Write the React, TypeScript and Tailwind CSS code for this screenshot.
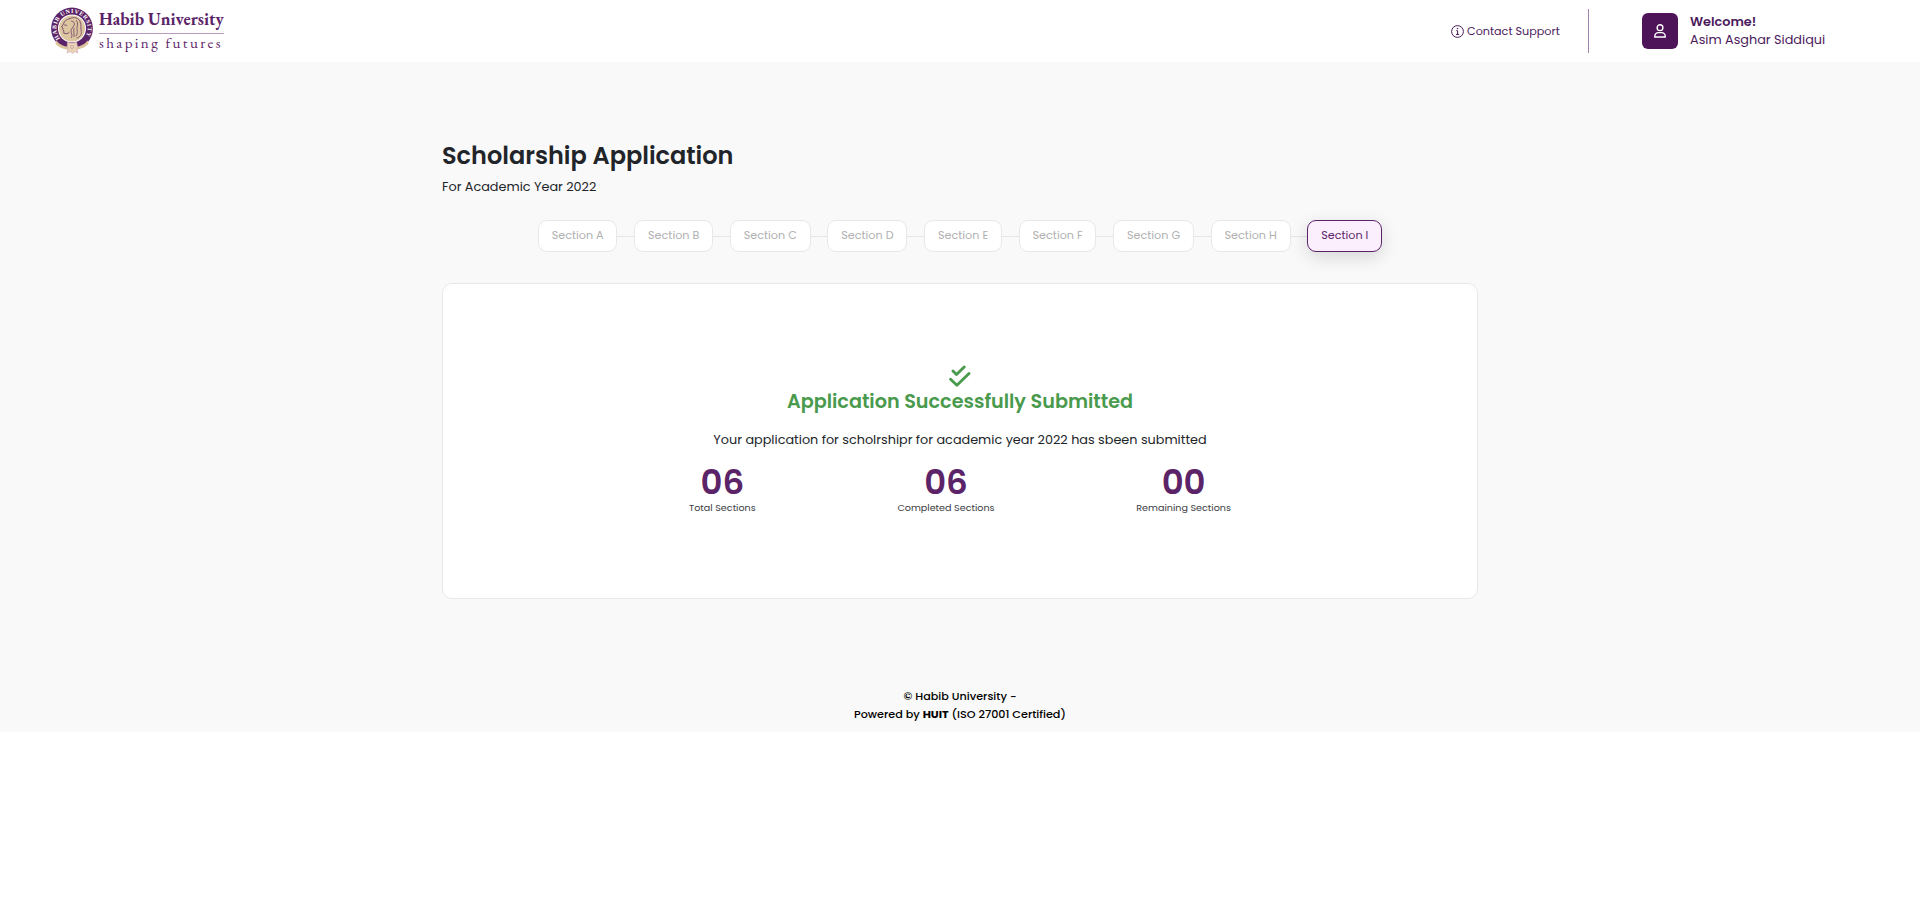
const sections = ["A", "B", "C", "D", "E", "F", "G", "H", "I"];

const stats = [
  { value: "06", label: "Total Sections" },
  { value: "06", label: "Completed Sections" },
  { value: "00", label: "Remaining Sections" },
];

function Seal() {
  return (
    <svg width="44" height="48" viewBox="0 0 44 48" className="shrink-0">
      <defs>
        <path id="ring" d="M10 32.5 A15.6 15.6 0 1 1 34.8 31.500" />
      </defs>
      <circle cx="22" cy="22.5" r="20.9" fill="#5c2468" />
      <circle cx="22" cy="22.5" r="14" fill="#fff" />
      <circle cx="22" cy="22.5" r="13" fill="#dcc6a0" />
      <text fill="#fff" fontFamily="Liberation Serif, serif" fontWeight="700" fontSize="6">
        <textPath href="#ring" textLength="67" lengthAdjust="spacing">HABIB UNIVERSITY</textPath>
      </text>
      <g fill="none" stroke="#7b4a70" strokeWidth="0.9" strokeLinecap="round" strokeLinejoin="round">
        <path d="M20 12.500c-3.500.8-6 2.500-6.500 5.500L11.500 21l1.500 1-.2 2 1 .8v2.400l3.200.6 2-1.200" />
        <path d="M20 12.500c4-2 8.500-.8 10 3 1.800 4.500.3 6.500 1.300 10 .5 3-1.300 5.500-4.300 6.500" />
        <path d="M21.500 15c2.500.3 3.500 2.200 2.500 4.500s-3 3-3 5.500 2 3.500.5 6.500" />
        <path d="M26.500 14.500c2 2.500.8 4.800.5 7s1.500 5-1 8.500M14.500 19l2.200.3M24 22.500c-.8 2.500.5 5 0 8" />
      </g>
      <path d="M6.500 34.500c3 4.500 9 6.500 15.500 6.500s12.500-2 15.500-6.500l1.200 2.800c-3.200 4.600-9.700 6.700-16.700 6.700S8.500 42 5.300 37.300z" fill="#dcc49c" />
      <path d="M17.500 35.500l2.500 1.500h4l2.500-1.500 1 5-.5 2 .8 4.500-2.800-1.500-2.500 2-2.500-2-3 1.500 1.200-4.500-1-2z" fill="#e8d3b6" stroke="#cfa5b4" strokeWidth="0.600" />
      <path d="M20 41l2-2 2 2-2 2z" fill="none" stroke="#b98b9a" strokeWidth="0.6" />
    </svg>
  );
}

export default function App() {
  return (
    <div className="h-[911px] overflow-hidden bg-white font-[Poppins,Inter,sans-serif] text-[#212529]">
      <header className="flex h-[62px] items-center bg-white">
        <div className="flex h-full items-start pt-[6px] pl-[50px]">
          <Seal />
          <div className="ml-[5px] w-[126px] pt-px font-['EB_Garamond','Liberation_Serif',serif] text-[#5c2468]">
            <div className="h-[26px] whitespace-nowrap text-[17.200px] leading-[25px] font-bold">Habib University</div>
            <div className="h-px w-[125px] bg-[#b99cc0]" />
            <div className="h-5 whitespace-nowrap text-[15px] leading-[18px] tracking-[2.370px]">shaping futures</div>
          </div>
        </div>
        <div className="ml-auto flex items-center pr-[95px] text-[#4b1a5c]">
          <svg width="13" height="13" viewBox="0 0 13 13" fill="none" stroke="currentColor" className="mt-px">
            <circle cx="6.500" cy="6.500" r="5.900" />
            <path d="M5.300 5.700h1.300v3.600M5 9.400h3.200" />
            <circle cx="6.500" cy="3.600" r="0.500" fill="currentColor" strokeWidth="0.500" />
          </svg>
          <div className="ml-[3px] w-[121px] text-[11.200px] leading-[18px] whitespace-nowrap">Contact Support</div>
          <div className="h-11 w-px bg-[#a283ad]" />
          <div className="ml-[53px] flex size-9 items-center justify-center rounded-[6px] bg-[#4e1458] text-white">
            <svg width="12" height="14" viewBox="0 0 12 14" fill="none" stroke="currentColor" strokeWidth="1.400">
              <circle cx="6" cy="3.700" r="2.900" />
              <path d="M.8 13v-.9a3.500 3.500 0 0 1 3.500-3.500h3.400a3.500 3.500 0 0 1 3.500 3.500v.9z" />
            </svg>
          </div>
          <div className="ml-3 w-[135px] whitespace-nowrap text-[12.800px] leading-[18px]">
            <div className="font-semibold">Welcome!</div>
            <div>Asim Asghar Siddiqui</div>
          </div>
        </div>
      </header>

      <div className="h-[670px] bg-[#f9f9f9]">
        <main className="mx-auto w-[1036px] pt-[78px]">
          <h1 className="h-8 whitespace-nowrap text-[24px] leading-8 font-semibold">Scholarship Application</h1>
          <p className="mt-[5px] h-5 whitespace-nowrap text-[12.800px] leading-5">For Academic Year 2022</p>

          <nav className="mt-[23px] flex h-8 items-center justify-center">
            {sections.map((s, i) => (
              <div key={s} className="flex items-center">
                {i > 0 && <div className="mt-px h-px w-[16.800px] bg-[#e6e6e6]" />}
                <div
                  className={`flex h-8 items-center justify-center rounded-[9px] border px-[12.800px] pb-[2px] text-[11.200px] whitespace-nowrap ${
                    s === "I"
                      ? "border-[#5c2468] bg-[#fbeffe] text-[#5c2468] shadow-[0_5px_18px_rgba(0,0,0,0.14)]"
                      : "border-[#e8e8e8] bg-white text-[#b0b0b0]"
                  }`}
                >
                  Section {s}
                </div>
              </div>
            ))}
          </nav>

          <section className="mt-[31px] flex h-[316px] flex-col items-center rounded-[10px] border border-[#e8e8e8] bg-white pt-[81px]">
            <svg width="22" height="22" viewBox="0 0 22 22" fill="none" stroke="#4a9a4d" strokeWidth="2.900" strokeLinecap="round" strokeLinejoin="round">
              <path d="M4 6l3.500 3.500L15.200 2" />
              <path d="M1.600 14.300l6.300 5.900L20 8.500" />
            </svg>
            <h2 className="mt-px h-7 whitespace-nowrap text-[19.200px] leading-7 font-semibold text-[#4a9a4d]">Application Successfully Submitted</h2>
            <p className="mt-[13px] h-5 whitespace-nowrap text-[12.800px] leading-[22px]">Your application for scholrshipr for academic year 2022 has sbeen submitted</p>
            <div className="mt-[14px] flex w-[542px] justify-between">
              {stats.map((s) => (
                <div key={s.label} className="flex flex-col items-center whitespace-nowrap">
                  <div className="h-[38px] text-[34px] leading-[38px] font-semibold text-[#5c2468]">{s.value}</div>
                  <div className="text-[9.600px] leading-[14px] text-[#3c4045]">{s.label}</div>
                </div>
              ))}
            </div>
          </section>

          <footer className="mt-[88px] text-center text-[11.200px] leading-[18px] font-medium text-black">
            <div>© Habib University -</div>
            <div>
              Powered by <b className="font-bold">HUIT</b> (ISO 27001 Certified)
            </div>
          </footer>
        </main>
      </div>
    </div>
  );
}
